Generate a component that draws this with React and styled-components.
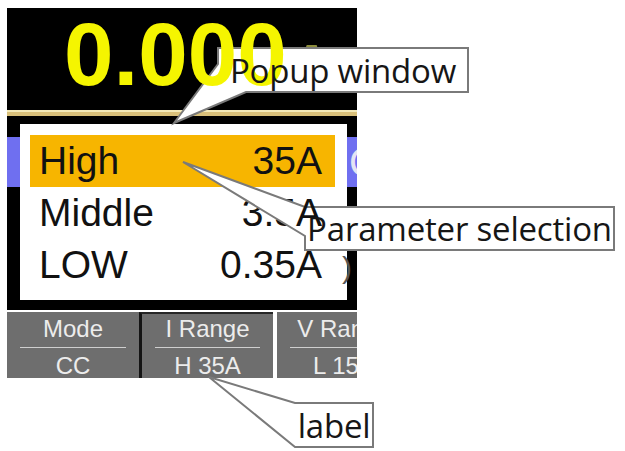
import styled, { createGlobalStyle } from "styled-components";

const GlobalStyle = createGlobalStyle`
  html, body {
    margin: 0;
    padding: 0;
    background: #fff;
  }
  body {
    font-family: "Liberation Sans", Arial, sans-serif;
  }
`;

const Page = styled.div`
  position: relative;
  width: 625px;
  height: 451px;
  padding: 8px 0 0 7px;
  box-sizing: border-box;
  overflow: hidden;
`;

const Device = styled.div`
  width: 350px;
  display: flex;
  flex-direction: column;
`;

const Screen = styled.div`
  position: relative;
  height: 302px;
  background: #000;
  display: flex;
  flex-direction: column;
  overflow: hidden;
`;

const Reading = styled.div`
  height: 102px;
  padding: 2px 0 0 57px;
  box-sizing: border-box;
  display: flex;
  align-items: baseline;
`;

const Digits = styled.span`
  position: relative;
  z-index: 2;
  font-weight: 700;
  font-size: 89px;
  line-height: 88px;
  color: #f5f500;
`;

const Unit = styled.span`
  font-weight: 700;
  font-size: 58px;
  line-height: 88px;
  color: #8d8d3c;
  margin-left: 4px;
`;

const TanLine = styled.div`
  height: 4px;
  border-top: 2px solid #f3e9b8;
  background: #d9c07a;
`;

const Lower = styled.div`
  flex: 1;
  padding-top: 21px;
  display: flex;
  flex-direction: column;
`;

const BlueRow = styled.div`
  height: 50px;
  background: #6f6ff0;
  display: flex;
  justify-content: flex-end;
  align-items: center;
`;

const EdgeGlyph = styled.span`
  font-size: 40px;
  color: #e4e4f4;
  margin-right: -21px;
`;

const Popup = styled.div`
  position: absolute;
  left: 13px;
  top: 116px;
  width: 327px;
  height: 176px;
  background: #fff;
  padding: 11px 12px 0 10px;
  box-sizing: border-box;
  display: flex;
  flex-direction: column;
`;

const OptionRow = styled.div`
  height: 52px;
  line-height: 52px;
  font-size: 39px;
  color: #111;
  padding: 0 13px 0 9px;
  display: flex;
  justify-content: space-between;
  background: ${(p) => (p.$active ? "#f7b500" : "transparent")};
`;

/* part of a value that is drawn over the callout shapes */
const Raised = styled.span`
  position: relative;
  z-index: 2;
`;

const Ghost = styled.span`
  display: inline-block;
  width: 0;
  overflow: visible;
  font-size: 30px;
  color: #555;
  transform: translateX(20px);
`;

const Bar = styled.div`
  margin-top: 2px;
  height: 66px;
  display: flex;
  overflow: hidden;
`;

const Cell = styled.div`
  flex: none;
  width: ${(p) => p.$w}px;
  margin-left: ${(p) => p.$gap || 0}px;
  background: #6e6e6e;
  color: #ececec;
  display: flex;
  flex-direction: column;
  align-items: center;
  box-sizing: border-box;
  padding-top: ${(p) => (p.$active ? 3 : 5)}px;
  border-left: ${(p) => (p.$active ? "3px solid #141414" : "none")};
  border-top: ${(p) => (p.$active ? "2px solid #262626" : "none")};
`;

const CellLabel = styled.div`
  font-size: 24px;
  line-height: 24px;
  white-space: nowrap;
`;

const Separator = styled.div`
  align-self: stretch;
  height: 2px;
  background: #cfcfcf;
  margin: 6px 13px 0;
`;

const CellValue = styled.div`
  margin-top: 6px;
  font-size: 24px;
  line-height: 24px;
  white-space: nowrap;
`;

const Overlay = styled.svg`
  position: absolute;
  left: 0;
  top: 0;
  z-index: 1;
  pointer-events: none;
`;

const CalloutText = styled.div`
  position: absolute;
  z-index: 3;
  left: ${(p) => p.$x}px;
  top: ${(p) => p.$y}px;
  width: ${(p) => p.$w}px;
  height: ${(p) => p.$h}px;
  display: flex;
  align-items: center;
  justify-content: center;
  font-family: "Open Sans", "Noto Sans", sans-serif;
  font-size: 33px;
  letter-spacing: -0.2px;
  color: #161616;
  white-space: nowrap;
`;

const options = [
  { name: "High", value: ["35A"], active: true },
  { name: "Middle", value: ["3.5", "A"] },
  { name: "LOW", value: ["0.35A"], ghost: ")" },
];

const cells = [
  { label: "Mode", value: "CC", w: 132 },
  { label: "I Range", value: "H 35A", w: 134, active: true },
  { label: "V Range", value: "L 15V", w: 134, gap: 4 },
];

const callouts = [
  {
    text: "Popup window",
    box: [218, 48, 250, 44],
    d: "M218,48 H468 V92 H246 L174,123 L218,64 Z",
  },
  {
    text: "Parameter selection",
    box: [305, 207, 309, 43],
    d: "M305,207 H614 V250 H305 V236 L183,162 Z",
  },
  {
    text: "label",
    box: [295, 403, 78, 44],
    d: "M295,403 H373 V447 H295 L209,377 Z",
  },
];

export default function App() {
  return (
    <>
      <GlobalStyle />
      <Page>
        <Device>
          <Screen>
            <Reading>
              <Digits>0.000</Digits>
              <Unit>A</Unit>
            </Reading>
            <TanLine />
            <Lower>
              <BlueRow>
                <EdgeGlyph>C</EdgeGlyph>
              </BlueRow>
            </Lower>
            <Popup>
              {options.map((o) => (
                <OptionRow key={o.name} $active={o.active}>
                  <span>{o.name}</span>
                  <span>
                    {o.value[0]}
                    {o.value[1] && <Raised>{o.value[1]}</Raised>}
                    {o.ghost && <Ghost>{o.ghost}</Ghost>}
                  </span>
                </OptionRow>
              ))}
            </Popup>
          </Screen>
          <Bar>
            {cells.map((c) => (
              <Cell key={c.label} $w={c.w} $gap={c.gap} $active={c.active}>
                <CellLabel>{c.label}</CellLabel>
                <Separator />
                <CellValue>{c.value}</CellValue>
              </Cell>
            ))}
          </Bar>
        </Device>

        <Overlay width="625" height="451" viewBox="0 0 625 451">
          {callouts.map((c) => (
            <path
              key={c.text}
              d={c.d}
              fill="#fff"
              stroke="#7a7a7a"
              strokeWidth="2"
              strokeLinejoin="miter"
            />
          ))}
        </Overlay>
        {callouts.map((c) => (
          <CalloutText
            key={c.text}
            $x={c.box[0]}
            $y={c.box[1]}
            $w={c.box[2]}
            $h={c.box[3]}
          >
            {c.text}
          </CalloutText>
        ))}
      </Page>
    </>
  );
}
